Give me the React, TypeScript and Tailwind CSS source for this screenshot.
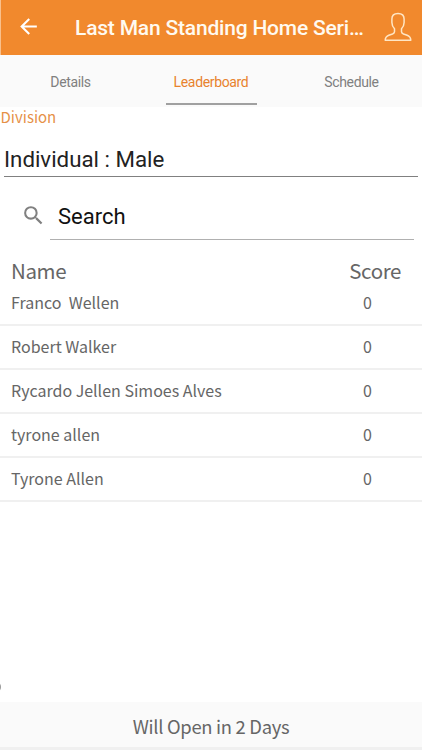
import React, { useState } from "react";
import { MdArrowBack, MdSearch } from "react-icons/md";

const tabs = ["Details", "Leaderboard", "Schedule"];

const players = [
  { name: "Franco  Wellen", score: 0 },
  { name: "Robert Walker", score: 0 },
  { name: "Rycardo Jellen Simoes Alves", score: 0 },
  { name: "tyrone allen", score: 0 },
  { name: "Tyrone Allen", score: 0 },
];

const ProfileIcon = () => (
  <svg width="28" height="30" viewBox="0 0 28 30" fill="none" stroke="#ffe6c4" strokeWidth="1.5" strokeLinejoin="round">
    <path d="M14 1.500C10 1.500 7.900 3.400 7.900 7v3.500c0 2.800 1.100 4.700 2.600 6.200v3.100c0 1.100-.7 1.700-2 2.200L4.800 23.300C2.400 24.200 1.300 25.700 1.200 28.200h25.600c-.1-2.500-1.200-4-3.600-4.900L19.500 22c-1.300-.5-2-1.100-2-2.200v-3.100c1.500-1.500 2.600-3.400 2.600-6.200V7C20.100 3.400 18 1.500 14 1.500Z" />
  </svg>
);

const App = () => {
  const [activeTab, setActiveTab] = useState("Leaderboard");
  const [search, setSearch] = useState("");

  return (
    <div className="relative flex h-[750px] w-[422px] flex-col overflow-hidden bg-white font-['Noto_Sans_CJK_SC',sans-serif] text-[#666666]">
      {/* Header */}
      <header className="flex h-[55px] shrink-0 items-center border-l border-[#f9c08c] bg-[#f1892d] font-[Roboto,sans-serif] text-white">
        <button className="ml-[15px] w-[59px] -mt-[2px]" aria-label="Back">
          <MdArrowBack className="size-[25px]" />
        </button>
        <h1 className="w-[299px] whitespace-nowrap text-[21px] font-medium leading-[28px] tracking-[-0.2px] text-[#fffaf0]">
          Last Man Standing Home Seri…
        </h1>
        <button className="ml-[10px] -mt-[2px]" aria-label="Profile">
          <ProfileIcon />
        </button>
      </header>

      {/* Tabs */}
      <nav className="flex h-[52px] shrink-0 bg-[#fafafa] pl-[25px] pr-[23px] font-[Roboto,sans-serif] text-[14px] tracking-[-0.35px]">
        {tabs.map((tab) => (
          <button
            key={tab}
            onClick={() => setActiveTab(tab)}
            className={`flex w-[91px] flex-col justify-end pb-[2px] ${
              tab === "Leaderboard" ? "mx-[49.5px]" : ""
            } ${activeTab === tab ? "text-[#e8822d]" : "text-[#808080]"}`}
          >
            <span className="mb-[11px] w-full text-center leading-[20px]">{tab}</span>
            <span className={`h-[2px] w-full ${activeTab === tab ? "bg-[#a0a0a0]" : ""}`} />
          </button>
        ))}
      </nav>

      <main className="flex-1">
        {/* Division */}
        <p className="h-[22px] pl-[0.5px] text-[15px] leading-[20px] text-[#e69147]">Division</p>
        <div className="mx-[4px] h-[48px] border-b border-[#808080] pt-[16px] font-[Roboto,sans-serif] text-[22.3px] leading-[28px] text-[#222222]">
          Individual : Male
        </div>

        {/* Search */}
        <div className="flex h-[63px] pl-[21px] pr-[8px]">
          <MdSearch className="mt-[26px] size-[25px] text-[#808080]" />
          <input
            value={search}
            onChange={(e) => setSearch(e.target.value)}
            placeholder="Search"
            className="ml-[4px] min-w-0 flex-1 border-b border-[#b0b0b0] pl-[8px] pt-[16px] font-[Roboto,sans-serif] text-[22px] text-black outline-none placeholder:text-[#111111]"
          />
        </div>

        {/* Leaderboard */}
        <div className="flex h-[42px] items-end justify-between pb-[2px] pl-[11px] pr-[21px] text-[20.5px] leading-[20px] tracking-[-0.4px]">
          <span className="h-[20px]">Name</span>
          <span className="h-[20px]">Score</span>
        </div>
        <ul className="text-[16px]">
          {players.map((player) => (
            <li
              key={player.name}
              className="flex h-[44px] items-center justify-between border-b-2 border-[#f0f0f0] pb-[2px] pl-[11px] pr-[50px]"
            >
              <span className="whitespace-pre">{player.name}</span>
              <span>{player.score}</span>
            </li>
          ))}
        </ul>
      </main>

      <span className="absolute -left-[11px] top-[681px] size-[12px] rounded-full bg-[#999999]" />

      {/* Footer */}
      <footer className="flex h-[48px] shrink-0 items-center justify-center border-b-[3px] border-[#f0f0f0] bg-[#fafafa] pt-[4px] text-[18.4px] tracking-[-0.3px]">
        Will Open in 2 Days
      </footer>
    </div>
  );
};

export default App;
